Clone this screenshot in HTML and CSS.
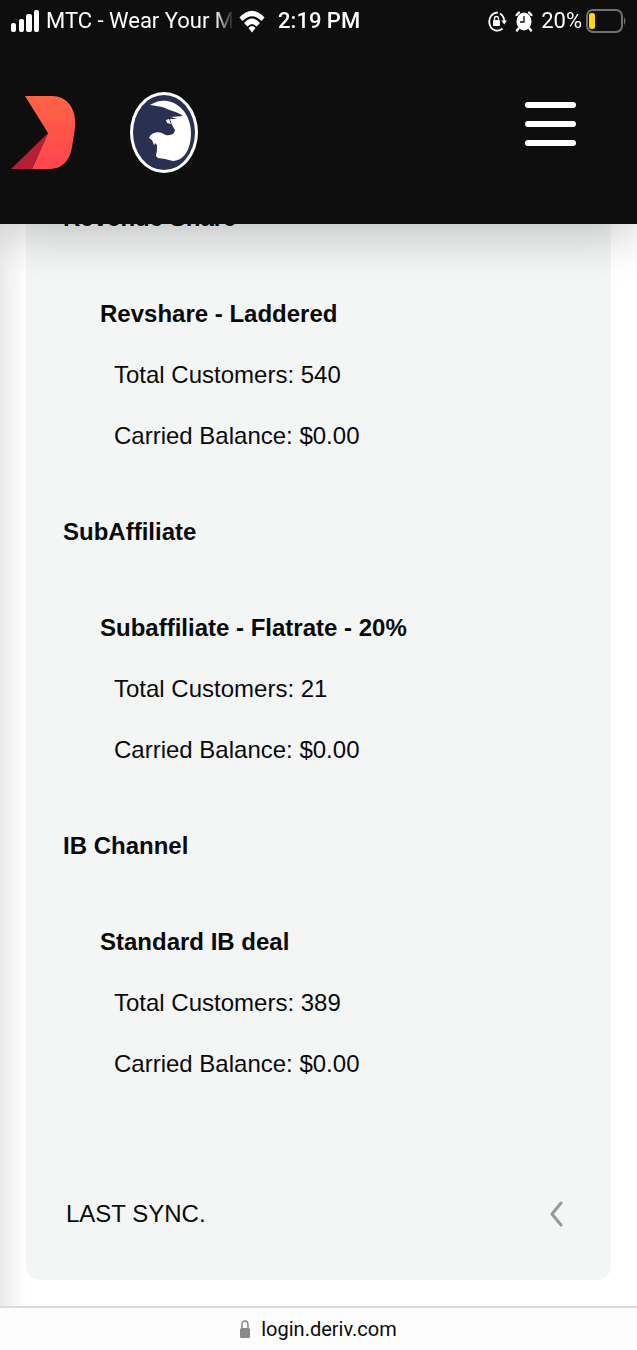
FILE: index.html
```
<!DOCTYPE html>
<html lang="en">
<head>
    <meta charset="UTF-8">
    <meta name="viewport" content="width=device-width, initial-scale=1.0">
    <title>Deriv - Partner Plans</title>
    <link rel="stylesheet" href="styles.css">
</head>
<body>
    <header class="header">
        <div class="status-bar">
            <div class="status-group">
                <svg class="signal" width="30" height="22" viewBox="0 0 30 22" fill="#fff">
                    <rect x="0" y="13" width="5" height="9" rx="2"/>
                    <rect x="8" y="9" width="5" height="13" rx="2"/>
                    <rect x="15" y="4" width="6" height="18" rx="2"/>
                    <rect x="23" y="0" width="5" height="22" rx="2"/>
                </svg>
                <span class="carrier">MTC - Wear Your M</span>
                <svg class="wifi" width="26" height="23" viewBox="0 0 26 23">
                    <path d="M0.500 7.500Q13-6 25.500 7.500L22.500 11Q13 1.500 3.500 11Z" fill="#fff"/>
                    <path d="M5 13Q13 4 21 13L17.500 16.500Q13 11.500 8.500 16.500Z" fill="#fff"/>
                    <path d="M9.500 18Q13 14 16.500 18L13 22.500Z" fill="#fff"/>
                </svg>
                <span class="time">2:19 PM</span>
            </div>
            <div class="status-group status-right">
                <svg class="rotation" width="19" height="21" viewBox="0 0 19 21">
                    <path d="M14.500 17.500A8 9 0 1 1 10 1.700M12 2.500Q16 5 16.300 10" fill="none" stroke="#fff" stroke-width="1.800"/>
                    <path d="M13.300 9.500H19L16.200 13.500Z" fill="#fff"/>
                    <rect x="5" y="9" width="7" height="6" rx="1" fill="#fff"/>
                    <path d="M6.500 9V7.500Q6.500 5.500 8.500 5.500T10.500 7.500V9" fill="none" stroke="#fff" stroke-width="1.300"/>
                </svg>
                <svg class="alarm" width="18" height="21" viewBox="0 0 18 21">
                    <ellipse cx="9" cy="10.500" rx="7.500" ry="9" fill="#fff"/>
                    <path d="M1.500 4L4 1.500M16.500 4L14 1.500M3.500 17.500L2 19.500M14.500 17.500L16 19.500" stroke="#fff" stroke-width="2.200" stroke-linecap="round"/>
                    <path d="M9 5V11H5" fill="none" stroke="#0e0e0e" stroke-width="1.300"/>
                </svg>
                <span class="percent">20%</span>
                <svg class="battery" width="41" height="24" viewBox="0 0 41 24">
                    <rect x="1" y="1" width="35" height="22" rx="6" fill="none" stroke="#717171" stroke-width="2"/>
                    <rect x="3" y="4" width="6" height="16" rx="2.500" fill="#ffd60a"/>
                    <path d="M38 8Q41 12 38 16Z" fill="#717171"/>
                </svg>
            </div>
        </div>
        <div class="navbar">
            <div class="brands">
                <svg class="logo" width="65" height="74" viewBox="0 0 65 74">
                    <defs>
                        <linearGradient id="logoFill" x1="0" y1="0" x2="0" y2="1">
                            <stop offset="0" stop-color="#ff6444"/>
                            <stop offset="1" stop-color="#ff444f"/>
                        </linearGradient>
                    </defs>
                    <path d="M14 0H41C57 0 66 14 64 32L61 51C59 64 51 73 39 73H21L37 37Z" fill="url(#logoFill)"/>
                    <path d="M0 73L37 37L21 73Z" fill="#b71f36"/>
                </svg>
                <svg class="bull" width="68" height="81" viewBox="0 0 68 81">
                    <ellipse cx="34" cy="40.500" rx="34" ry="40.500" fill="#fff"/>
                    <ellipse cx="34" cy="40.500" rx="31" ry="37.500" fill="#2a3052"/>
                    <path d="M20 13C26 9 32 8 37 9C51 11 61 25 61 41C61 57 54 69 43 69L35 67L28 66L26 64L27 58L24 53L22 48L19 46C21 41 27 39 32 41C37 45 42 43 44 41L45 38L42 33L40 27L47 27L41 25L53 24C46 19 40 19 35 16C30 14 25 14 20 13Z" fill="#fff"/>
                    <path d="M36 28L39 27L41 32L37 31Z" fill="#fff"/>
                    <path d="M25 51L27 53L27 58L24 54Z" fill="#2a3052"/>
                </svg>
            </div>
            <button class="menu-btn" type="button" aria-label="Menu">
                <span class="menu-line"></span>
                <span class="menu-line"></span>
                <span class="menu-line"></span>
            </button>
        </div>
    </header>

    <main class="page">
        <div class="card">
            <section class="plan">
                <h2>Revenue Share</h2>
                <div class="deal">
                    <h3>Revshare - Laddered</h3>
                    <p>Total Customers: 540</p>
                    <p>Carried Balance: $0.00</p>
                </div>
            </section>
            <section class="plan">
                <h2>SubAffiliate</h2>
                <div class="deal">
                    <h3>Subaffiliate - Flatrate - 20%</h3>
                    <p>Total Customers: 21</p>
                    <p>Carried Balance: $0.00</p>
                </div>
            </section>
            <section class="plan">
                <h2>IB Channel</h2>
                <div class="deal">
                    <h3>Standard IB deal</h3>
                    <p>Total Customers: 389</p>
                    <p>Carried Balance: $0.00</p>
                </div>
            </section>
            <button class="sync-btn" type="button">
                <span>LAST SYNC.</span>
                <svg width="13" height="26" viewBox="0 0 13 26">
                    <path d="M11 2L2 13L11 24" fill="none" stroke="#999" stroke-width="3" stroke-linecap="round" stroke-linejoin="round"/>
                </svg>
            </button>
        </div>
    </main>

    <footer class="address-bar">
        <svg width="10" height="18" viewBox="0 0 10 18">
            <rect x="0" y="8" width="10" height="10" rx="1.500" fill="#88888d"/>
            <path d="M2 8V5Q2 1 5 1T8 5V8" fill="none" stroke="#88888d" stroke-width="1.500"/>
        </svg>
        <span>login.deriv.com</span>
    </footer>
</body>
</html>
```
FILE: styles.css
```
* {
    margin: 0;
    padding: 0;
    box-sizing: border-box;
}

body {
    background: white;
    color: #0a0a0a;
    font-family: "Liberation Sans", Arial, sans-serif;
    font-size: 24px;
    line-height: 32px;
}

button {
    background: none;
    border: none;
    color: inherit;
    font: inherit;
    cursor: pointer;
}

svg {
    display: block;
    flex: none;
}

/* Header */
.header {
    position: fixed;
    top: 0;
    left: 0;
    right: 0;
    z-index: 2;
    height: 224px;
    background: #0e0e0e;
    color: white;
    box-shadow: 0 8px 48px rgba(0,0,0,0.24);
}

.status-bar {
    display: flex;
    justify-content: space-between;
    align-items: center;
    height: 42px;
    padding: 0 10px 0 11px;
    font-family: Roboto, sans-serif;
    font-size: 22px;
    line-height: 28px;
    white-space: nowrap;
}

.status-group {
    display: flex;
    align-items: center;
}

.carrier {
    margin-left: 5px;
    margin-right: 5px;
    -webkit-mask-image: linear-gradient(to right, black 90%, transparent);
    mask-image: linear-gradient(to right, black 90%, transparent);
}

.time {
    margin-left: 13px;
    font-weight: 500;
}

.status-right {
    gap: 8px;
}

.percent {
    margin-right: -4px;
}

.navbar {
    display: flex;
    justify-content: space-between;
    align-items: flex-start;
    padding: 50px 61px 0 11px;
}

.brands {
    display: flex;
    align-items: center;
    gap: 54px;
}

.menu-btn {
    display: flex;
    flex-direction: column;
    gap: 13px;
    padding-top: 10px;
}

.menu-line {
    width: 51px;
    height: 6px;
    border-radius: 3px;
    background: white;
}

/* Plans */
.page {
    padding: 160px 26px 70px;
    background: linear-gradient(to right, #ebebeb, white 26px);
}

.card {
    padding: 42px 38px 50px 37px;
    background: #f4f6f6;
    border-radius: 14px;
}

.plan {
    margin-bottom: 64px;
}

.plan h2,
.plan h3 {
    font-size: inherit;
    font-weight: bold;
}

.deal {
    display: flex;
    flex-direction: column;
    gap: 29px;
    margin-top: 64px;
    padding-left: 37px;
}

.deal p {
    padding-left: 14px;
}

.sync-btn {
    display: flex;
    justify-content: space-between;
    align-items: center;
    width: 100%;
    margin-top: 118px;
    padding: 0 10px 0 3px;
}

/* Address bar */
.address-bar {
    position: fixed;
    bottom: 0;
    left: 0;
    right: 0;
    display: flex;
    justify-content: center;
    align-items: center;
    gap: 11px;
    height: 44px;
    border-top: 2px solid #dadada;
    background: #fcfcfc;
    font-family: Roboto, sans-serif;
    font-size: 20px;
    line-height: 28px;
}
```
